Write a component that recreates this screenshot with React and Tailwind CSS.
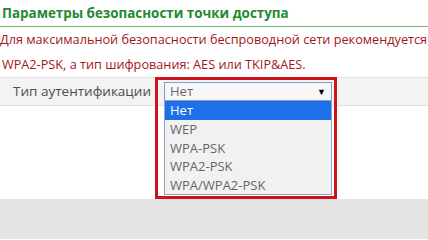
export default function App() {
  const options = ['WEP', 'WPA-PSK', 'WPA2-PSK', 'WPA/WPA2-PSK'];

  return (
    <div className="relative w-[428px] h-[240px] overflow-hidden bg-white font-['Open_Sans',sans-serif]">
      <div className="h-[27px] border-b border-[#74b874] pl-[2px] text-[13.4px] font-bold leading-[26px] text-[#24892f] whitespace-nowrap">
        Параметры безопасности точки доступа
      </div>
      <div className="whitespace-nowrap text-[12.7px] leading-[25px] text-[#a3161c]">
        <div>Для максимальной безопасности беспроводной сети рекомендуется установить</div>
        <div className="pl-[2px]">WPA2-PSK, а тип шифрования: AES или TKIP&amp;AES.</div>
      </div>
      <div className="flex h-[29px] items-center border-y border-[#e3e3e3] bg-[#f3f3f3]">
        <div className="flex w-[151px] shrink-0 justify-end whitespace-nowrap text-[13.5px] text-[#4d4d4d]">
          Тип аутентификации
        </div>
        <div className="ml-[13px] flex h-[19px] w-[168px] shrink-0 items-center justify-between border border-[#7f9fc8] bg-[#f7f7f7] px-[5px] text-[13px] text-[#666]">
          <span>Нет</span>
          <span className="text-[9px] text-black">▼</span>
        </div>
      </div>
      <div className="h-[93px] bg-white" />
      <div className="h-[40px] bg-[#e4e4e4]" />

      {/* open dropdown list */}
      <div className="absolute left-[164px] top-[101px] w-[168px] border border-t-0 border-[#8aa6cb] bg-[#f1f1f1] text-[13px] text-[#666]">
        <div className="h-[19px] bg-[#1f6fe8] pl-[5px] leading-[19px] text-white">Нет</div>
        {options.map((o) => (
          <div key={o} className="h-[18.5px] pl-[5px] leading-[18.5px]">{o}</div>
        ))}
      </div>

      {/* red highlight frame */}
      <div className="absolute left-[155px] top-[77px] h-[122px] w-[182px] border-[3px] border-[#d0121a]" />
    </div>
  );
}
